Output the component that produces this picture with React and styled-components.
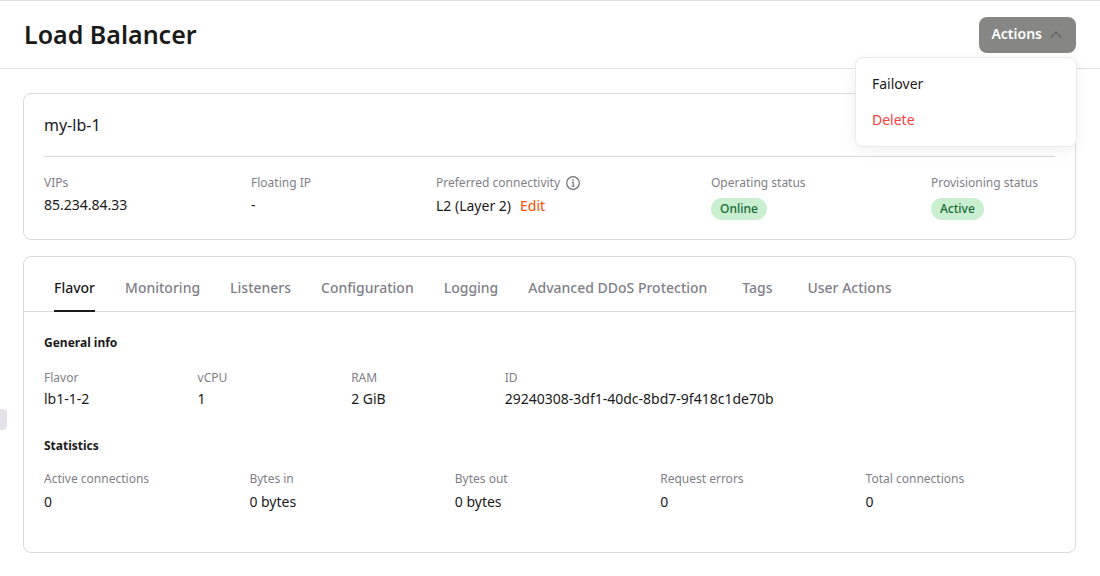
import { useState } from "react";
import styled, { createGlobalStyle, css } from "styled-components";

const GlobalStyle = createGlobalStyle`
  * {
    box-sizing: border-box;
  }

  body {
    margin: 0;
    background: #fff;
    color: #1a1a1a;
    font-family: "Noto Sans", sans-serif;
    font-size: 14px;
    line-height: 20px;
  }

  button {
    font-family: inherit;
    cursor: pointer;
  }
`

const Page = styled.div`
  position: relative;
  min-height: 100vh;
`

const Header = styled.header`
  display: flex;
  align-items: center;
  justify-content: space-between;
  padding: 16px 24px 15px;
  border-top: 1px solid #dfdee3;
  border-bottom: 1px solid #dfdee3;
`

const PageTitle = styled.h1`
  margin: 0;
  padding-bottom: 2px;
  font-size: 25px;
  font-weight: 600;
  line-height: 34px;
`

const Dropdown = styled.div`
  position: relative;
`

const ActionsButton = styled.button`
  display: flex;
  align-items: center;
  gap: 8px;
  height: 36px;
  padding: 0 14px 2px 12px;
  border: 0;
  border-radius: 8px;
  background: #868684;
  color: #fff;
  font-size: 14px;
  font-weight: 600;
  line-height: 20px;
`

const Menu = styled.div`
  position: absolute;
  top: calc(100% + 4px);
  right: -1px;
  z-index: 1;
  display: flex;
  flex-direction: column;
  width: 222px;
  padding: 8px 0;
  border: 1px solid #e9e9ee;
  border-radius: 8px;
  background: #fff;
  box-shadow: 0 4px 16px rgba(20, 20, 40, 0.06);
`

const MenuItem = styled.button`
  padding: 8px 16px;
  border: 0;
  background: none;
  color: ${({ $danger }) => ($danger ? "#f8413f" : "#1a1a1a")};
  font-size: 14px;
  line-height: 20px;
  text-align: left;

  &:hover {
    background: #f6f6f8;
  }
`

const SidebarHandle = styled.button`
  position: absolute;
  top: 409px;
  left: 0;
  width: 7px;
  height: 21px;
  padding: 0;
  border: 0;
  border-radius: 0 4px 4px 0;
  background: #e4e2e8;
`

const Content = styled.main`
  display: flex;
  flex-direction: column;
  gap: 16px;
  padding: 24px 24px 24px 23px;
`

const Card = styled.section`
  border: 1px solid #d9d9de;
  border-radius: 8px;
  background: #fff;
`

const SummaryCard = styled(Card)`
  padding: 20px 20px 19px;
`

const CardTitle = styled.h2`
  margin: 0;
  padding-bottom: 20px;
  border-bottom: 1px solid #d9d9de;
  font-size: 16px;
  font-weight: 400;
  line-height: 22px;
`

const SummaryRow = styled.dl`
  display: grid;
  grid-template-columns: 207fr 185fr 275fr 220fr 124fr;
  margin: 0;
  padding-top: 16px;
`

const Label = styled.dt`
  display: flex;
  align-items: center;
  gap: 6px;
  color: #807f87;
  font-size: 12px;
  line-height: 20px;
`

const Value = styled.dd`
  display: flex;
  align-items: center;
  gap: 9px;
  margin: ${({ $gap = 2 }) => $gap}px 0 0;
  font-size: 14px;
  line-height: 22px;
`

const InfoIcon = styled.svg`
  width: 14px;
  height: 14px;
`

const EditLink = styled.a`
  color: #ff4c00;
  text-decoration: none;
`

const Badge = styled.span`
  padding: 0 9px;
  border-radius: 11px;
  background: #caeed0;
  color: #136c35;
  font-size: 12px;
  font-weight: 500;
  line-height: 22px;
`

const TabList = styled.div`
  display: flex;
  gap: 30px;
  padding: 20px 30px 0;
  border-bottom: 1px solid #d9d9de;
`

const Tab = styled.button`
  min-width: 40px;
  margin-bottom: -1px;
  padding: 0 0 11px;
  border: 0;
  border-bottom: 2px solid transparent;
  background: none;
  color: #807f87;
  font-size: 14px;
  font-weight: 500;
  line-height: 22px;

  ${({ $active }) =>
    $active &&
    css`
      border-bottom-color: #1a1a1a;
      color: #1a1a1a;
    `}
`

const TabPanel = styled.div`
  display: flex;
  flex-direction: column;
  gap: 26px;
  padding: 21px 20px 39px;
`

const SectionTitle = styled.h3`
  margin: 0 0 ${({ $gap }) => $gap}px;
  font-size: 12px;
  font-weight: 700;
  line-height: 20px;
`

const Grid = styled.dl`
  display: grid;
  grid-template-columns: ${({ $columns }) => $columns};
  gap: 16px;
  margin: 0;
`

const TABS = [
  "Flavor",
  "Monitoring",
  "Listeners",
  "Configuration",
  "Logging",
  "Advanced DDoS Protection",
  "Tags",
  "User Actions",
]

const GENERAL_INFO = [
  { label: "Flavor", value: "lb1-1-2" },
  { label: "vCPU", value: "1" },
  { label: "RAM", value: "2 GiB" },
  { label: "ID", value: "29240308-3df1-40dc-8bd7-9f418c1de70b" },
]

const STATISTICS = [
  { label: "Active connections", value: "0" },
  { label: "Bytes in", value: "0 bytes" },
  { label: "Bytes out", value: "0 bytes" },
  { label: "Request errors", value: "0" },
  { label: "Total connections", value: "0" },
]

const Field = ({ label, gap, icon, children }) => (
  <div>
    <Label>
      {label}
      {icon}
    </Label>
    <Value $gap={gap}>{children}</Value>
  </div>
)

const Info = () => (
  <InfoIcon viewBox="0 0 14 14" fill="none" stroke="#6f6e76" aria-hidden="true">
    <circle cx="7" cy="7" r="6.3" strokeWidth="1.2" />
    <path d="M5.8 6.2h1.4v4M5.6 10.2h3" strokeWidth="1.1" />
    <circle cx="7" cy="3.9" r="0.8" fill="#6f6e76" stroke="none" />
  </InfoIcon>
)

const ActionsMenu = () => {
  const [open, setOpen] = useState(true)

  return (
    <Dropdown>
      <ActionsButton type="button" aria-expanded={open} onClick={() => setOpen(!open)}>
        Actions
        <svg width="12" height="8" viewBox="0 0 12 8" fill="none" stroke="#626260" strokeWidth="1.2" aria-hidden="true">
          <path d={open ? "M1 7.5l5-5.5 5 5.5" : "M1 1l5 5.5L11 1"} />
        </svg>
      </ActionsButton>
      {open && (
        <Menu>
          <MenuItem type="button">Failover</MenuItem>
          <MenuItem type="button" $danger>Delete</MenuItem>
        </Menu>
      )}
    </Dropdown>
  )
}

const App = () => {
  const [tab, setTab] = useState("Flavor")

  return (
    <Page>
      <GlobalStyle />
      <Header>
        <PageTitle>Load Balancer</PageTitle>
        <ActionsMenu />
      </Header>
      <SidebarHandle type="button" aria-label="Toggle sidebar" />
      <Content>
        <SummaryCard>
          <CardTitle>my-lb-1</CardTitle>
          <SummaryRow>
            <Field label="VIPs" gap={1}>85.234.84.33</Field>
            <Field label="Floating IP" gap={1}>-</Field>
            <Field label="Preferred connectivity" icon={<Info />}>
              L2 (Layer 2) <EditLink href="#edit">Edit</EditLink>
            </Field>
            <Field label="Operating status" gap={5}>
              <Badge>Online</Badge>
            </Field>
            <Field label="Provisioning status" gap={5}>
              <Badge>Active</Badge>
            </Field>
          </SummaryRow>
        </SummaryCard>
        <Card>
          <TabList role="tablist">
            {TABS.map((name) => (
              <Tab
                key={name}
                type="button"
                role="tab"
                aria-selected={name === tab}
                $active={name === tab}
                onClick={() => setTab(name)}
              >
                {name}
              </Tab>
            ))}
          </TabList>
          <TabPanel role="tabpanel">
            <div>
              <SectionTitle $gap={15}>General info</SectionTitle>
              <Grid $columns="1fr 1fr 1fr 4fr">
                {GENERAL_INFO.map(({ label, value }) => (
                  <Field key={label} label={label} gap={0}>{value}</Field>
                ))}
              </Grid>
            </div>
            <div>
              <SectionTitle $gap={13}>Statistics</SectionTitle>
              <Grid $columns="repeat(5, 1fr)">
                {STATISTICS.map(({ label, value }) => (
                  <Field key={label} label={label}>{value}</Field>
                ))}
              </Grid>
            </div>
          </TabPanel>
        </Card>
      </Content>
    </Page>
  )
}

export default App
